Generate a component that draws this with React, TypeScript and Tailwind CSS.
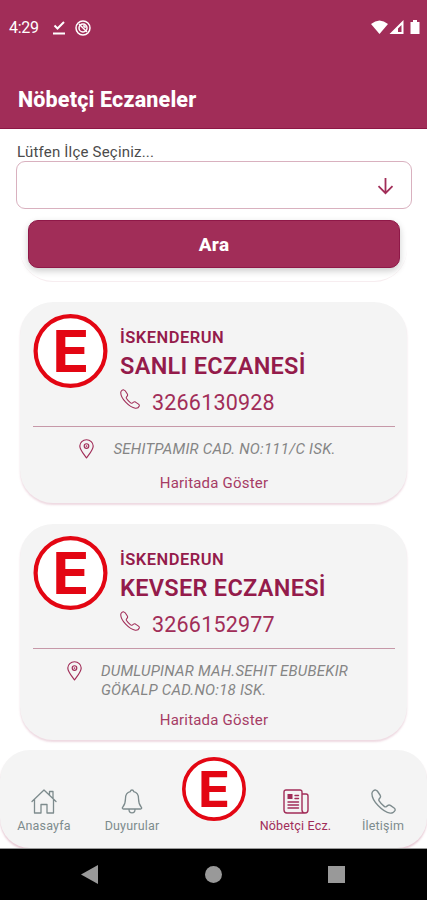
import React from "react";

type IconProps = { className?: string };

const PhoneIcon = ({ className }: IconProps) => (
  <svg className={className} viewBox="0 0 24 24" fill="none" stroke="currentColor" strokeWidth="1.3" strokeLinejoin="round" strokeLinecap="round">
    <path d="M4.600 1.100C3.300.5 1 2.300.9 4.200c-.1 3.600 2.300 7.800 5.900 11.600 3.700 3.900 8 6.800 11.600 7.300 2 .2 4.200-1.200 4.700-2.700.3-1-.1-1.600-.9-2.200l-3.600-2.500c-.8-.5-1.600-.5-2.300 0l-1.600 1.200c-.6.4-1.300.3-2-.2-1.900-1.400-3.700-3.300-4.900-5.200-.4-.7-.4-1.300 0-1.900l1-1.400c.5-.7.5-1.400 0-2.200L6.400 2.400C5.900 1.700 5.400 1.300 4.600 1.100Z" />
  </svg>
);

const PinIcon = ({ className }: IconProps) => (
  <svg className={className} viewBox="0 0 15 20" fill="none" stroke="currentColor" strokeWidth="1.150" strokeLinejoin="round">
    <path d="M7.500 19C5 15.500.8 10.800.8 7a6.700 6.300 0 0 1 13.400 0c0 3.800-4.200 8.500-6.700 12Z" />
    <circle cx="7.500" cy="7" r="2.300" />
    <circle cx="7.500" cy="7" r=".3" />
  </svg>
);

const HomeIcon = () => (
  <svg className="h-[25px] w-[26px]" viewBox="0 0 26 25" fill="none" stroke="currentColor" strokeWidth="1.300" strokeLinejoin="round" strokeLinecap="round">
    <path d="M1 12.500 13 1l12 11.500M3.500 10.500V24H10v-8.500h6V24h6.500V10.500M18.500 6V2.500H22v6.800" />
  </svg>
);

const BellIcon = () => (
  <svg className="h-[25px] w-[22px]" viewBox="0 0 22 25" fill="none" stroke="currentColor" strokeWidth="1.300" strokeLinejoin="round" strokeLinecap="round">
    <path d="M11 1c-1.200 0-1.600 1-1.800 1.700C6 3.500 4.500 6 4.500 9.500c0 5-1 6.500-2.700 8.500-.9 1-.5 2 .7 2h17c1.200 0 1.600-1 .7-2-1.700-2-2.700-3.500-2.700-8.500 0-3.500-1.500-6-4.700-6.800C12.600 2 12.200 1 11 1ZM8 20.500c0 4.500 6 4.500 6 0" />
  </svg>
);

const NewsIcon = () => (
  <svg className="h-[25px] w-[26px]" viewBox="0 0 26 25" fill="none" stroke="currentColor" strokeWidth="1.400" strokeLinejoin="round" strokeLinecap="round">
    <path d="M19 21V3c0-1.200-.8-2-2-2H3C1.800 1 1 1.800 1 3v18c0 2 1 3 3 3h18M19 5h4c1.200 0 2 .8 2 2v14c0 2-1 3-3 3s-3-1-3-3" />
    <path d="M12 6.500h3.500M12 9.500h3.500M5 13h10.500M5 16h10.500M5 19h10.500" />
    <path fill="currentColor" stroke="none" d="M4.500 5H9.500v5H4.500z" />
  </svg>
);

const PharmacyLogo = ({ className }: IconProps) => (
  <svg className={className} viewBox="0 0 74 74">
    <circle cx="37" cy="37" r="34.900" fill="#fff" stroke="#e30613" strokeWidth="4.200" />
    <text transform="translate(37.200 58.200) scale(1.060 1)" textAnchor="middle" fill="#e30613" className="font-['Inter',sans-serif] text-[57.500px] font-bold">E</text>
  </svg>
);

type Pharmacy = { name: string; phone: string; address: string[] };

const pharmacies: Pharmacy[] = [
  { name: "SANLI ECZANESİ", phone: "3266130928", address: ["SEHITPAMIR CAD. NO:111/C ISK."] },
  { name: "KEVSER ECZANESİ", phone: "3266152977", address: ["DUMLUPINAR MAH.SEHIT EBUBEKIR", "GÖKALP CAD.NO:18 ISK."] },
];

function PharmacyCard({ name, phone, address }: Pharmacy) {
  return (
    <article className="mx-5 rounded-[33px] bg-[#f4f4f4] px-[13px] pt-3 shadow-[0_2px_2px_rgba(162,45,88,0.18)]">
      <div className="flex h-[112px]">
        <PharmacyLogo className="h-[74px] w-[75px] shrink-0" />
        <div className="ml-3 pt-[14px] whitespace-nowrap text-[#941b4b]">
          <div className="h-5 text-[16.500px] leading-5 font-semibold tracking-[0.5px]">İSKENDERUN</div>
          <div className="mt-[2px] h-8 text-[23.500px] leading-8 font-semibold tracking-[0.3px]">{name}</div>
          <div className="mt-[5px] flex h-8 items-center text-[#a12d58]">
            <PhoneIcon className="-mt-[8px] size-5" />
            <span className="ml-3 text-[21.500px] tracking-[0.2px]">{phone}</span>
          </div>
        </div>
      </div>
      <div className="mr-[-1px] h-px bg-[#c698a8]" />
      <div className="flex justify-center pt-3 pr-3">
        <PinIcon className="h-5 w-[15px] text-[#a12d58]" />
        <div className="-mb-[3px] ml-[19px] pt-px text-[15px] leading-[18.500px] tracking-[0.240px] whitespace-nowrap text-[#858585] italic">
          {address.map((line) => <div key={line}>{line}</div>)}
        </div>
      </div>
      <div className="flex h-11 items-start justify-center pt-[14px] pl-px text-[15px] leading-5 tracking-[0.2px] text-[#a63c65]">Haritada Göster</div>
    </article>
  );
}

export default function App() {
  return (
    <div className="flex h-[900px] w-[427px] flex-col overflow-hidden bg-white font-['Roboto',sans-serif]">
      <header className="h-[129px] shrink-0 border-b border-[#8d1745] bg-[#a12d58] text-white">
        <div className="flex h-[55px] items-center pr-[7px] pl-[9px]">
          <span className="w-11 pt-px text-[16px] tracking-[-0.3px]">4:29</span>
          <svg className="h-[14px] w-[12px]" viewBox="0 0 12 14" fill="none" stroke="currentColor" strokeWidth="2"><path d="m1.500 4.500 3 3L11 1M0 12.500h12" /></svg>
          <svg className="ml-[10px] size-4" viewBox="0 0 16 16" fill="none" stroke="currentColor" strokeWidth="1.500"><circle cx="8" cy="8" r="7" /><circle cx="8" cy="8" r="4" /><path d="m4 4 8 8M8 6h2v2" /></svg>
          <svg className="ml-auto h-[15px] w-[49px]" viewBox="0 0 49 15" fill="currentColor"><path d="M0 4Q8.500-3 17 4L8.500 14Z" /><path fillRule="evenodd" d="M18.500 14 32.500 0v14ZM27 12h3.500V5L27 8.500Z" /><path d="M39.500 2h2.500V0h4v2h2.500v12h-9Z" /></svg>
        </div>
        <h1 className="mt-[29px] pl-[18px] text-[21.500px] leading-8 font-extrabold tracking-[0.170px]">Nöbetçi Eczaneler</h1>
      </header>

      <main className="min-h-0 flex-1">
        <div className="pt-[14px] pl-[17px] text-[15px] leading-[18px] tracking-[0.2px] text-[#4b4b4b]">Lütfen İlçe Seçiniz...</div>
        <div className="mr-[15px] ml-4 flex h-12 items-center justify-end rounded-[9px] border border-[#d9b1bf] pr-[17px] text-[#a12d58]">
          <svg className="mt-px h-[18px] w-[17px]" viewBox="0 0 17 18" fill="none" stroke="currentColor" strokeWidth="1.800"><path d="M8.500 1v15M1.500 9.200l7 7 7-7" /></svg>
        </div>
        <button className="relative mt-[11px] ml-7 block h-12 w-[372px] rounded-[10px] border border-[#8f1848] bg-[#a12d58] pt-[2px] text-[19px] font-extrabold tracking-[0.3px] text-white shadow-[0_3px_7px_rgba(0,0,0,0.2)]">Ara</button>
        <div className="mx-5 -mt-5 h-[34px] rounded-b-[33px] border-b border-[#f7edf0]" />
        <div className="mt-5 flex flex-col gap-[21px]">
          {pharmacies.map((item) => <PharmacyCard key={item.phone} {...item} />)}
        </div>
      </main>

      <div className="h-[99px] shrink-0 overflow-hidden border-b border-[#999] bg-white">
        <nav className="flex h-full rounded-[30px] bg-[#f4f4f4] text-[12.500px] tracking-[0.180px] whitespace-nowrap text-[#7d8b8d] shadow-[0_2px_2px_rgba(162,45,88,0.25)]">
          <div className="flex w-[88px] flex-col items-center pt-[39px]"><HomeIcon /><span className="mt-[2px] leading-5">Anasayfa</span></div>
          <div className="flex w-[88px] flex-col items-center pt-[39px]"><BellIcon /><span className="mt-[2px] leading-5">Duyurular</span></div>
          <div className="flex w-[76px] justify-center pt-[7px]"><PharmacyLogo className="h-16 w-16" /></div>
          <div className="flex w-[87px] flex-col items-center pt-[39px] text-[#a12d58]"><NewsIcon /><span className="mt-[2px] leading-5">Nöbetçi Ecz.</span></div>
          <div className="flex w-[88px] flex-col items-center pt-[39px]"><PhoneIcon className="size-[25px]" /><span className="mt-[2px] leading-5">İletişim</span></div>
        </nav>
      </div>
      <footer className="flex h-[51px] shrink-0 items-center bg-black text-[#999]">
        <svg className="ml-[81px] h-[19px] w-[17px]" viewBox="0 0 17 19" fill="currentColor"><path d="M17 0v19L0 9.500Z" /></svg>
        <div className="ml-[107px] size-[17px] rounded-full bg-[#999]" />
        <div className="ml-[106px] size-[17px] bg-[#999]" />
      </footer>
    </div>
  );
}
